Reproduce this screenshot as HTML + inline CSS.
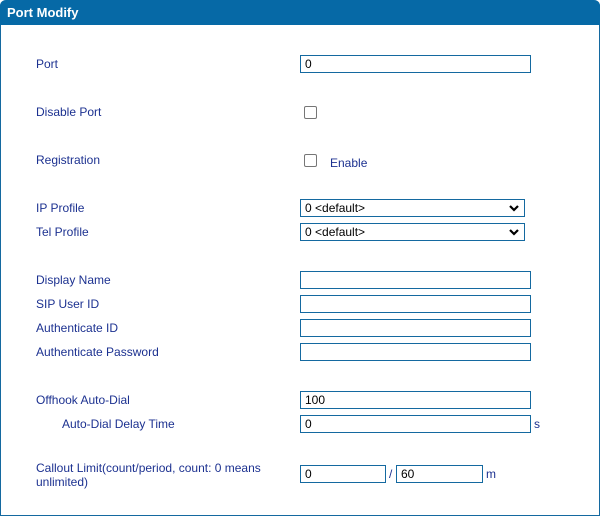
<!DOCTYPE html>
<html><head><meta charset="utf-8"><style>
*{margin:0;padding:0;box-sizing:border-box}
body{width:600px;height:516px;background:#fff;font-family:"Liberation Sans",Arial,sans-serif;font-size:12px;position:relative;overflow:hidden}
.panel{position:absolute;left:0;top:0;width:600px;height:516px;border:1px solid #1469a0;border-top:none;border-radius:6px 6px 0 0}
.hdr{position:absolute;left:0;top:0;width:600px;height:25px;background:#0669a6;border-radius:6px 6px 0 0;color:#fff;font-weight:bold;font-size:13px;line-height:25px;padding-left:7px}
.l{position:absolute;color:#1c3190;left:36px;line-height:14px}
.in{position:absolute;left:300px;width:231px;height:18px;border:1px solid #1469a0;font-size:12px;line-height:16px;padding-left:4px;color:#000}
.sel{position:absolute;left:300px;width:225px;height:18px;border:1px solid #1469a0;font-size:12px;line-height:16px;padding-left:4px;color:#000}
.sel svg{position:absolute;right:5px;top:5px}
.cb{position:absolute;left:304px;width:13px;height:13px;border:1px solid #767676;border-radius:2px}
</style></head><body>
<div class="panel"></div>
<div class="hdr">Port Modify</div>
<div class="l" style="top:57px">Port</div><div class="in" style="top:55px">0</div>
<div class="l" style="top:105px">Disable Port</div><div class="cb" style="top:106px"></div>
<div class="l" style="top:153px">Registration</div><div class="cb" style="top:154px"></div>
<div class="l" style="left:330px;top:156px">Enable</div>
<div class="l" style="top:201px">IP Profile</div>
<div class="sel" style="top:199px">0 &lt;default&gt;<svg width="10" height="7" viewBox="0 0 10 7"><path d="M1 1L5 5L9 1" stroke="#000" stroke-width="2.2" fill="none"/></svg></div>
<div class="l" style="top:225px">Tel Profile</div>
<div class="sel" style="top:223px">0 &lt;default&gt;<svg width="10" height="7" viewBox="0 0 10 7"><path d="M1 1L5 5L9 1" stroke="#000" stroke-width="2.2" fill="none"/></svg></div>
<div class="l" style="top:273px">Display Name</div><div class="in" style="top:271px"></div>
<div class="l" style="top:297px">SIP User ID</div><div class="in" style="top:295px"></div>
<div class="l" style="top:321px">Authenticate ID</div><div class="in" style="top:319px"></div>
<div class="l" style="top:345px">Authenticate Password</div><div class="in" style="top:343px"></div>
<div class="l" style="top:393px">Offhook Auto-Dial</div><div class="in" style="top:391px">100</div>
<div class="l" style="left:62px;top:417px">Auto-Dial Delay Time</div><div class="in" style="top:415px">0</div>
<div class="l" style="left:534px;top:417px">s</div>
<div class="l" style="top:461px;width:260px">Callout Limit(count/period, count: 0 means unlimited)</div>
<div class="in" style="top:465px;width:86px">0</div>
<div class="l" style="left:389px;top:467px">/</div>
<div class="in" style="top:465px;left:396px;width:87px">60</div>
<div class="l" style="left:486px;top:467px">m</div>
</body></html>
